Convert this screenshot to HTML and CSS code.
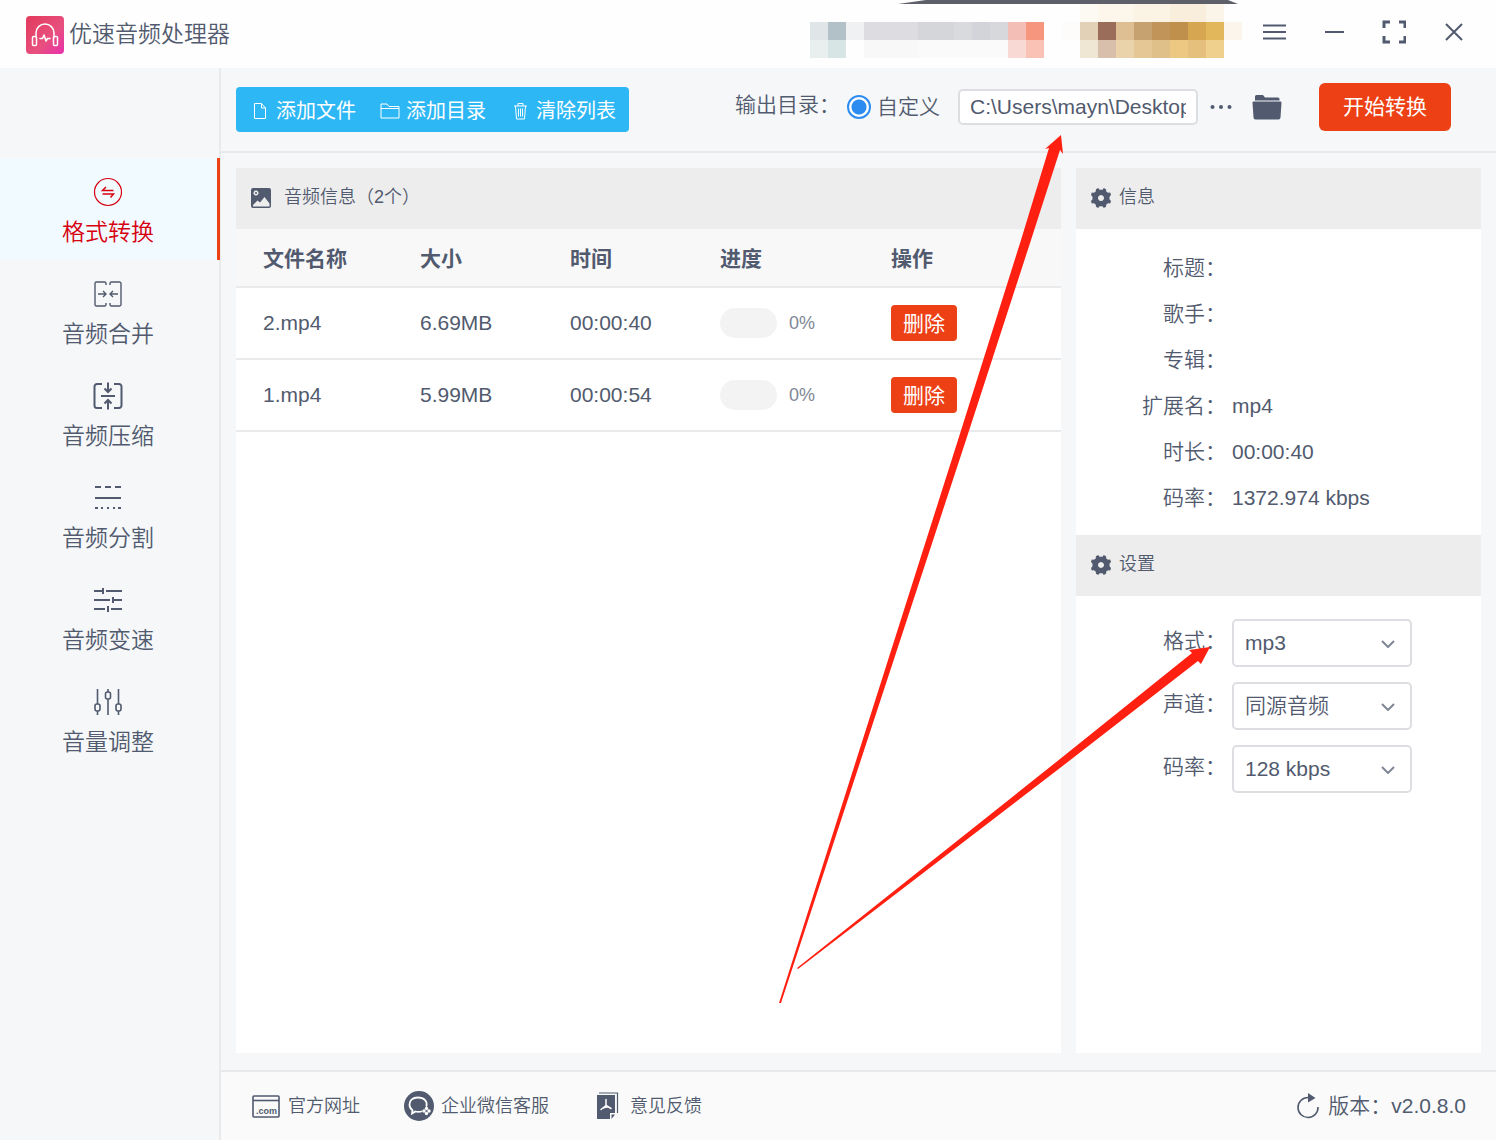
FILE: index.html
```html
<!DOCTYPE html>
<html lang="zh-CN">
<head>
    <meta charset="UTF-8">
    <meta name="viewport" content="width=device-width, initial-scale=1.0">
    <title>优速音频处理器</title>
    <link rel="stylesheet" href="styles.css">
</head>
<body>
    <header class="titlebar">
        <svg class="logo" viewBox="0 0 38 38">
            <defs>
                <linearGradient id="logo-bg" x1="0" y1="0" x2="1" y2="1">
                    <stop offset="0" stop-color="#e23a5c"/>
                    <stop offset="0.6" stop-color="#e8507e"/>
                    <stop offset="1" stop-color="#e82fae"/>
                </linearGradient>
            </defs>
            <rect width="38" height="38" rx="4" fill="url(#logo-bg)"/>
            <g fill="none" stroke="#fff" stroke-width="1.5" stroke-linecap="round" stroke-linejoin="round">
                <path d="M10 21v-4a9 9 0 0 1 18 0v4"/>
                <rect x="6.500" y="20.500" width="4" height="9" rx="1"/>
                <rect x="27.500" y="20.500" width="4" height="9" rx="1"/>
                <path d="M14 22.500h2.500l1.500-3.500 2 6 1.500-2.500H24"/>
            </g>
        </svg>
        <h1>优速音频处理器</h1>

        <!-- account area, pixelated -->
        <svg class="account" viewBox="0 0 432 68" shape-rendering="crispEdges">
            <g transform="translate(270 4)">
                <rect width="54" height="18" fill="#fdfaf3"/>
                <rect x="18" width="36" height="18" fill="#fdf6ea"/>
                <rect x="54" width="36" height="18" fill="#fbf3e3"/>
                <rect x="90" width="36" height="18" fill="#f9eedb"/>
                <rect x="126" width="18" height="18" fill="#fbf5e9"/>
            </g>
            <g transform="translate(0 22)">
                <rect width="18" height="18" fill="#e0e5e8"/>
                <rect x="18" width="18" height="18" fill="#b2c0c7"/>
                <rect x="36" width="18" height="18" fill="#f0f1f3"/>
                <rect x="54" width="54" height="18" fill="#dddde1"/>
                <rect x="108" width="36" height="18" fill="#d5d6da"/>
                <rect x="144" width="18" height="18" fill="#d9dade"/>
                <rect x="162" width="18" height="18" fill="#d2d4d9"/>
                <rect x="180" width="18" height="18" fill="#d6d8dc"/>
                <rect x="198" width="18" height="18" fill="#f2beb5"/>
                <rect x="216" width="18" height="18" fill="#f6967f"/>
                <rect x="252" width="18" height="18" fill="#fefcfb"/>
                <rect x="270" width="18" height="18" fill="#e3d1b7"/>
                <rect x="288" width="18" height="18" fill="#9a6d5a"/>
                <rect x="306" width="18" height="18" fill="#debf93"/>
                <rect x="324" width="18" height="18" fill="#c7a271"/>
                <rect x="342" width="18" height="18" fill="#c1955a"/>
                <rect x="360" width="18" height="18" fill="#bf8f4c"/>
                <rect x="378" width="18" height="18" fill="#d6a651"/>
                <rect x="396" width="18" height="18" fill="#e2b75c"/>
                <rect x="414" width="18" height="18" fill="#fbf5ec"/>
            </g>
            <g transform="translate(0 40)">
                <rect width="18" height="18" fill="#e9eeef"/>
                <rect x="18" width="18" height="18" fill="#d7e6e5"/>
                <rect x="54" width="54" height="18" fill="#f8f8f9"/>
                <rect x="108" width="90" height="18" fill="#fafafa"/>
                <rect x="198" width="18" height="18" fill="#f8d9d4"/>
                <rect x="216" width="18" height="18" fill="#fac1b5"/>
                <rect x="270" width="18" height="18" fill="#efe6d3"/>
                <rect x="288" width="18" height="18" fill="#d7bfab"/>
                <rect x="306" width="18" height="18" fill="#ead2aa"/>
                <rect x="324" width="18" height="18" fill="#e4c794"/>
                <rect x="342" width="18" height="18" fill="#dfc088"/>
                <rect x="360" width="18" height="18" fill="#edc883"/>
                <rect x="378" width="18" height="18" fill="#e5bf7c"/>
                <rect x="396" width="18" height="18" fill="#efd08c"/>
            </g>
            <path d="M88 4 116 0H418L428 4Z" fill="#5e6069" shape-rendering="auto"/>
        </svg>

        <div class="window-controls">
            <button type="button" aria-label="菜单"><svg viewBox="0 0 24 24"><path d="M1 5.500h23M1 12h23M1 18.500h23"/></svg></button>
            <button type="button" aria-label="最小化"><svg viewBox="0 0 24 24"><path d="M3 12h19"/></svg></button>
            <button type="button" aria-label="最大化"><svg viewBox="0 0 24 24"><path d="M2 8V2h6M17 2h6v6M23 16v6h-6M8 22H2v-6" stroke-width="3"/></svg></button>
            <button type="button" aria-label="关闭"><svg viewBox="0 0 24 24"><path d="M4 4l16 16M20 4L4 20"/></svg></button>
        </div>
    </header>

    <div class="layout">
        <nav class="sidebar">
            <a class="nav-item active" href="#convert">
                <svg viewBox="0 0 30 30" stroke-width="1.200"><circle cx="15" cy="15" r="13.500"/><path d="M20.500 13.500H9.500l3.500-3.500M9.500 17h11l-3 3.500" stroke-width="1.500"/></svg>
                <span>格式转换</span>
            </a>
            <a class="nav-item" href="#merge">
                <svg viewBox="0 0 30 30" stroke-width="1.400"><path d="M13 6V4.500a1.500 1.500 0 0 0-1.500-1.500h-8A1.500 1.500 0 0 0 2 4.500v21A1.500 1.500 0 0 0 3.500 27h8a1.500 1.500 0 0 0 1.500-1.500V24M17 6V4.500a1.500 1.500 0 0 1 1.500-1.500h8A1.500 1.500 0 0 1 28 4.500v21a1.500 1.500 0 0 1-1.500 1.500h-8a1.500 1.500 0 0 1-1.500-1.500V24M5 15h8M10 12l3 3-3 3M25 15h-8M20 12l-3 3 3 3"/></svg>
                <span>音频合并</span>
            </a>
            <a class="nav-item" href="#compress">
                <svg viewBox="0 0 30 30" stroke-width="2"><path d="M9 3H4a2.500 2.500 0 0 0-2.500 2.500v19A2.500 2.500 0 0 0 4 27h5M21 3h5a2.500 2.500 0 0 1 2.500 2.500v19A2.500 2.500 0 0 1 26 27h-5M8 15h14M15 1.500v9M11.500 7.500 15 11l3.500-3.500M15 28.500v-9M11.500 22.500 15 19l3.500 3.500"/></svg>
                <span>音频压缩</span>
            </a>
            <a class="nav-item" href="#split">
                <svg viewBox="0 0 30 30" stroke-width="2"><path d="M2 4h6M12 4h6M22 4h6M2 15h26"/><path d="M2 25h3M8 25h2M14 25h2M20 25h2M25 25h3"/></svg>
                <span>音频分割</span>
            </a>
            <a class="nav-item" href="#speed">
                <svg viewBox="0 0 30 30" stroke-width="2"><path d="M1 6h8M10 3v6M13 6h16M1 15h16M20 12v6M20 15h9M1 24h11M15 21v6M18 24h11"/></svg>
                <span>音频变速</span>
            </a>
            <a class="nav-item" href="#volume">
                <svg viewBox="0 0 30 30" stroke-width="1.600"><path d="M4.500 2v15M4.500 24v4M15 2v3M15 12v16M25.500 2v15M25.500 24v4"/><rect x="2" y="17" width="5" height="7" rx="2"/><rect x="12.500" y="5" width="5" height="7" rx="2"/><rect x="23" y="17" width="5" height="7" rx="2"/></svg>
                <span>音量调整</span>
            </a>
        </nav>

        <div class="main">
            <div class="toolbar">
                <div class="file-actions">
                    <button type="button">
                        <svg viewBox="0 0 20 20"><path d="M4.500 2.500h7l4 4.500v10.500h-11zM11.500 2.500V7h4"/></svg>添加文件
                    </button>
                    <button type="button">
                        <svg viewBox="0 0 20 20"><path d="M1 17V3h6l2 2.500h10V17zM1 7.500h18"/></svg>添加目录
                    </button>
                    <button type="button">
                        <svg viewBox="0 0 20 20"><path d="M4 5h13M8 5V2.500h5V5M5.500 5l1 13h8l1-13M8.500 7.500v8M10.500 7.500v8M12.500 7.500v8"/></svg>清除列表
                    </button>
                </div>
                <div class="output">
                    <span class="output-label">输出目录：</span>
                    <label class="radio"><input type="radio" name="output" checked>自定义</label>
                    <input class="path" type="text" aria-label="输出目录" value="C:\Users\mayn\Desktop\output">
                    <button class="icon-btn dots" type="button" aria-label="选择目录">
                        <svg viewBox="0 0 22 22"><circle cx="2.500" cy="11" r="2"/><circle cx="11" cy="11" r="2"/><circle cx="19.500" cy="11" r="2"/></svg>
                    </button>
                    <button class="icon-btn folder" type="button" aria-label="打开目录">
                        <svg viewBox="0 0 30 30"><path d="M3 8.500V4.500Q3 3 4.500 3h6.500l2 2.500h13q1.500 0 1.500 1.500v1.500zM1.500 9.500h27q1 0 1 1l-1 15q-.200 2-2 2h-23q-1.800 0-2-2l-1-15q0-1 1-1z"/></svg>
                    </button>
                    <button class="start" type="button">开始转换</button>
                </div>
            </div>

            <div class="content">
                <section class="panel files">
                    <h2 class="panel-title files-title">
                        <svg viewBox="0 0 20 20"><path fill-rule="evenodd" d="M2 0h16q2 0 2 2v16q0 2-2 2H2q-2 0-2-2V2q0-2 2-2zM5 2.500a2.500 2.500 0 1 0 .01 0zM2 18.500h16.500v-3L13.500 9 9 14.500l-2.500-2L2 17z"/><circle cx="5" cy="5" r="1"/></svg>
                        音频信息（2个）
                    </h2>
                    <table>
                        <colgroup>
                            <col class="col-name"><col class="col-size"><col class="col-time"><col class="col-progress"><col>
                        </colgroup>
                        <thead>
                            <tr><th>文件名称</th><th>大小</th><th>时间</th><th>进度</th><th>操作</th></tr>
                        </thead>
                        <tbody>
                            <tr>
                                <td>2.mp4</td>
                                <td>6.69MB</td>
                                <td>00:00:40</td>
                                <td><div class="progress"><span class="bar"></span>0%</div></td>
                                <td><button class="delete" type="button">删除</button></td>
                            </tr>
                            <tr>
                                <td>1.mp4</td>
                                <td>5.99MB</td>
                                <td>00:00:54</td>
                                <td><div class="progress"><span class="bar"></span>0%</div></td>
                                <td><button class="delete" type="button">删除</button></td>
                            </tr>
                        </tbody>
                    </table>
                </section>

                <aside class="panel details">
                    <h2 class="panel-title">
                        <svg viewBox="0 0 20 20"><use href="#gear"/></svg>信息
                    </h2>
                    <dl class="info">
                        <dt>标题：</dt><dd></dd>
                        <dt>歌手：</dt><dd></dd>
                        <dt>专辑：</dt><dd></dd>
                        <dt>扩展名：</dt><dd>mp4</dd>
                        <dt>时长：</dt><dd>00:00:40</dd>
                        <dt>码率：</dt><dd>1372.974 kbps</dd>
                    </dl>
                    <h2 class="panel-title">
                        <svg viewBox="0 0 20 20"><path id="gear" fill-rule="evenodd" d="M5 1.300 7.200 0 8.500 1.800h3L12.800 0 15 1.300l.300 2.200 1.700 1.300 2.200-.200.800 2.400-1.500 1.800v2.400l1.500 1.800-.800 2.400-2.200-.200-1.700 1.300-.300 2.200-2.200 1.300-1.300-1.800h-3L7.200 20 5 18.700l-.300-2.200L3 15.200l-2.200.200L0 13l1.500-1.800V8.800L0 7l.800-2.400L3 4.800l1.700-1.300zM10 7a3 3 0 1 0 .01 0z"/></svg>设置
                    </h2>
                    <form class="settings">
                        <div class="field">
                            <label for="format">格式：</label>
                            <div class="select">
                                <select id="format"><option>mp3</option></select>
                                <svg viewBox="0 0 14 8"><path d="M1 1l6 6 6-6"/></svg>
                            </div>
                        </div>
                        <div class="field">
                            <label for="channel">声道：</label>
                            <div class="select">
                                <select id="channel"><option>同源音频</option></select>
                                <svg viewBox="0 0 14 8"><path d="M1 1l6 6 6-6"/></svg>
                            </div>
                        </div>
                        <div class="field">
                            <label for="bitrate">码率：</label>
                            <div class="select">
                                <select id="bitrate"><option>128 kbps</option></select>
                                <svg viewBox="0 0 14 8"><path d="M1 1l6 6 6-6"/></svg>
                            </div>
                        </div>
                    </form>
                </aside>
            </div>

            <footer class="footer">
                <a href="#site">
                    <svg viewBox="0 0 30 30"><g fill="none" stroke="#515a6e" stroke-width="1.600"><rect x="2" y="5" width="26" height="21" rx="1"/><path d="M2 9.500h26"/></g><text x="5" y="23" class="com">.com</text></svg>官方网址
                </a>
                <a href="#wechat">
                    <svg viewBox="0 0 30 30"><circle cx="15" cy="15" r="15" fill="#515a6e"/><g fill="none" stroke="#fff" stroke-width="1.800" stroke-linecap="round"><path d="M22.500 15c1-5-2.500-8.500-8.500-8.500S5.500 10 5.500 13.500c0 2.500 1.200 4.500 3 5.800L8 22.500l3.500-2q3 .800 6 0"/></g><g fill="#fff"><circle cx="22.500" cy="17.500" r="1.700"/><circle cx="20" cy="20" r="1.700"/><circle cx="25" cy="20" r="1.700"/><circle cx="22.500" cy="22.500" r="1.700"/></g></svg>企业微信客服
                </a>
                <a href="#feedback">
                    <svg viewBox="0 0 30 30"><path d="M4 4h18v18h-5v6H4z" fill="#515a6e"/><path d="M18.500 28v-4.500H22z" fill="#515a6e"/><path d="M6 2h18.500v20" fill="none" stroke="#515a6e" stroke-width="1.200"/><path d="M13 8.500v6l-5 4M13 14.500l5 3M10 17q3-1.500 6-1" fill="none" stroke="#fff" stroke-width="1.500" stroke-linecap="round"/></svg>意见反馈
                </a>
                <div class="version">
                    <svg viewBox="0 0 24 26"><path d="M12 4.500A10 10 0 1 0 22 14" fill="none" stroke="#515a6e" stroke-width="1.600"/><path d="M12 0l7.500 5-7.500 4.500z" fill="#515a6e"/></svg>
                    版本：v2.0.8.0
                </div>
            </footer>
        </div>
    </div>

    <!-- guide arrows pointing at the output directory and the format -->
    <svg class="guide" width="1496" height="1140" viewBox="0 0 1496 1140" aria-hidden="true">
        <path d="M1061 135 1045 149 1049 148 1021 240 958 440 779 1003 781 1003 966 440 1031 240 1060 150 1063 154Z"/>
        <path d="M1210 647 1189 650 1192 653 1060 759 797 968 798 969 1060 768 1198 661 1201 664Z"/>
    </svg>
</body>
</html>
```

FILE: styles.css
```css
* {
    box-sizing: border-box;
}
body {
    margin: 0;
    min-height: 100vh;
    display: flex;
    flex-direction: column;
    font-family: "Liberation Sans", "Noto Sans CJK SC", sans-serif;
    font-size: 21px;
    font-weight: 350;
    line-height: 30px;
    color: #515a6e;
    background: #f5f7f9;
}
button, input, select {
    font: inherit;
    color: inherit;
}
button {
    padding: 0;
    border: 0;
    background: none;
    cursor: pointer;
}
a {
    color: inherit;
    text-decoration: none;
}
svg {
    display: block;
    flex: none;
}

/* title bar */
.titlebar {
    display: flex;
    align-items: center;
    height: 68px;
    padding: 0 30px 0 26px;
    background: #fefefe;
}
.logo {
    width: 38px;
    height: 38px;
    margin-top: 2px;
}
.titlebar h1 {
    margin: 0 auto 0 5px;
    font-size: 23px;
    font-weight: 350;
}
.account {
    width: 432px;
    height: 68px;
    margin-right: 20px;
}
.window-controls {
    display: flex;
    gap: 36px;
    padding-bottom: 4px;
}
.window-controls svg {
    width: 24px;
    height: 24px;
    fill: none;
    stroke: #515a6e;
    stroke-width: 2;
}

/* layout */
.layout {
    flex: 1;
    display: flex;
}
.sidebar {
    flex: none;
    width: 221px;
    padding-top: 90px;
    border-right: 2px solid #e8eaec;
}
.nav-item {
    display: flex;
    flex-direction: column;
    align-items: center;
    gap: 10px;
    height: 102px;
    margin-right: -1px;
    padding-top: 19px;
    padding-right: 1px;
    border-right: 3px solid transparent;
    font-size: 23px;
}
.nav-item svg {
    width: 30px;
    height: 30px;
    fill: none;
    stroke: currentColor;
}
.nav-item.active {
    color: #d7000f;
    background: #f0faff;
    border-right-color: #ed4014;
}
.main {
    flex: 1;
    min-width: 0;
    display: flex;
    flex-direction: column;
}

/* toolbar */
.toolbar {
    display: flex;
    justify-content: space-between;
    align-items: flex-start;
    height: 85px;
    padding: 15px 45px 0 15px;
    border-bottom: 2px solid #e8eaec;
}
.file-actions {
    display: flex;
    gap: 24px;
    height: 45px;
    margin-top: 4px;
    padding: 2px 13px 0 14px;
    border-radius: 4px;
    background: #2db7f5;
    color: #fff;
    font-size: 20px;
    font-weight: 400;
}
.file-actions button {
    display: flex;
    align-items: center;
    gap: 6px;
}
.file-actions svg {
    width: 20px;
    height: 20px;
    fill: none;
    stroke: #fff;
    stroke-width: 1;
}
.output {
    display: flex;
    align-items: center;
    height: 48px;
}
.output-label {
    margin: 0 7px 4px 0;
}
.radio {
    display: flex;
    align-items: center;
    gap: 6px;
    margin-right: 18px;
}
.radio input {
    appearance: none;
    width: 24px;
    height: 24px;
    margin: 0;
    border: 2px solid #2d8cf0;
    border-radius: 50%;
    background: #fff;
}
.radio input:checked {
    background: radial-gradient(circle, #2d8cf0 7px, #fff 8px);
}
.path {
    width: 240px;
    height: 36px;
    padding: 0 10px;
    border: 2px solid #dcdee2;
    border-radius: 5px;
    background: #fff;
}
.icon-btn svg {
    fill: #515a6e;
}
.dots {
    margin: 0 20px 0 12px;
}
.dots svg {
    width: 22px;
    height: 22px;
}
.folder {
    margin-right: 37px;
}
.folder svg {
    width: 30px;
    height: 30px;
}
.start {
    width: 132px;
    height: 48px;
    border-radius: 6px;
    background: #ed4014;
    color: #fff;
    font-weight: 400;
}

/* panels */
.content {
    flex: 1;
    display: flex;
    gap: 15px;
    padding: 15px 15px 17px;
}
.panel {
    background: #fff;
}
.files {
    flex: 1;
    min-width: 0;
}
.details {
    flex: none;
    width: 405px;
}
.panel-title {
    display: flex;
    align-items: center;
    gap: 8px;
    height: 61px;
    margin: 0;
    padding: 0 15px 4px;
    background: #ededed;
    font-size: 18px;
    font-weight: 350;
}
.files-title {
    gap: 13px;
}
.panel-title svg {
    width: 20px;
    height: 20px;
    margin-top: 2px;
    fill: #515a6e;
}

/* file table */
table {
    width: 100%;
    table-layout: fixed;
    border-collapse: separate;
    border-spacing: 0;
}
.col-name {
    width: 157px;
}
.col-size, .col-time {
    width: 150px;
}
.col-progress {
    width: 171px;
}
th, td {
    padding: 0 0 0 27px;
    border-bottom: 2px solid #e8eaec;
    text-align: left;
}
th {
    height: 59px;
    padding-top: 2px;
    background: #f8f8f9;
    font-weight: 700;
}
td {
    height: 72px;
}
.progress {
    display: flex;
    align-items: center;
    gap: 12px;
    font-size: 18px;
    color: #808695;
}
.bar {
    width: 57px;
    height: 30px;
    border-radius: 15px;
    background: #f3f3f3;
}
.delete {
    display: block;
    width: 66px;
    height: 36px;
    padding-top: 2px;
    border-radius: 4px;
    background: #ed4014;
    color: #fff;
    font-weight: 400;
}

/* info and settings */
.info {
    display: grid;
    grid-template-columns: 150px 1fr;
    grid-auto-rows: 46px;
    column-gap: 6px;
    align-items: center;
    margin: 0;
    padding: 16px 0 14px;
}
.info dt {
    text-align: right;
}
.info dd {
    margin: 0;
}
.settings {
    display: flex;
    flex-direction: column;
    gap: 15px;
    padding-top: 23px;
}
.field {
    display: flex;
    gap: 6px;
}
.field label {
    width: 150px;
    padding-top: 7px;
    text-align: right;
}
.select {
    position: relative;
}
.select select {
    appearance: none;
    display: block;
    width: 180px;
    height: 48px;
    padding: 0 36px 0 11px;
    border: 2px solid #dcdee2;
    border-radius: 5px;
    background: #fff;
}
.select svg {
    position: absolute;
    top: 21px;
    right: 17px;
    width: 14px;
    height: 8px;
    fill: none;
    stroke: #808695;
    stroke-width: 2;
    pointer-events: none;
}

/* footer */
.footer {
    display: flex;
    align-items: center;
    gap: 44px;
    height: 70px;
    padding: 0 30px;
    border-top: 2px solid #e8eaec;
    background: #fafafa;
    font-size: 18px;
}
.footer a {
    display: flex;
    align-items: center;
    gap: 7px;
}
.footer a svg {
    width: 30px;
    height: 30px;
}
.com {
    font-size: 9px;
    font-weight: 700;
    fill: #515a6e;
}
.version {
    display: flex;
    align-items: center;
    gap: 8px;
    margin-left: auto;
    font-size: 21px;
}
.version svg {
    width: 24px;
    height: 26px;
}

.guide {
    position: absolute;
    top: 0;
    left: 0;
    fill: #ff2011;
    pointer-events: none;
}
```
